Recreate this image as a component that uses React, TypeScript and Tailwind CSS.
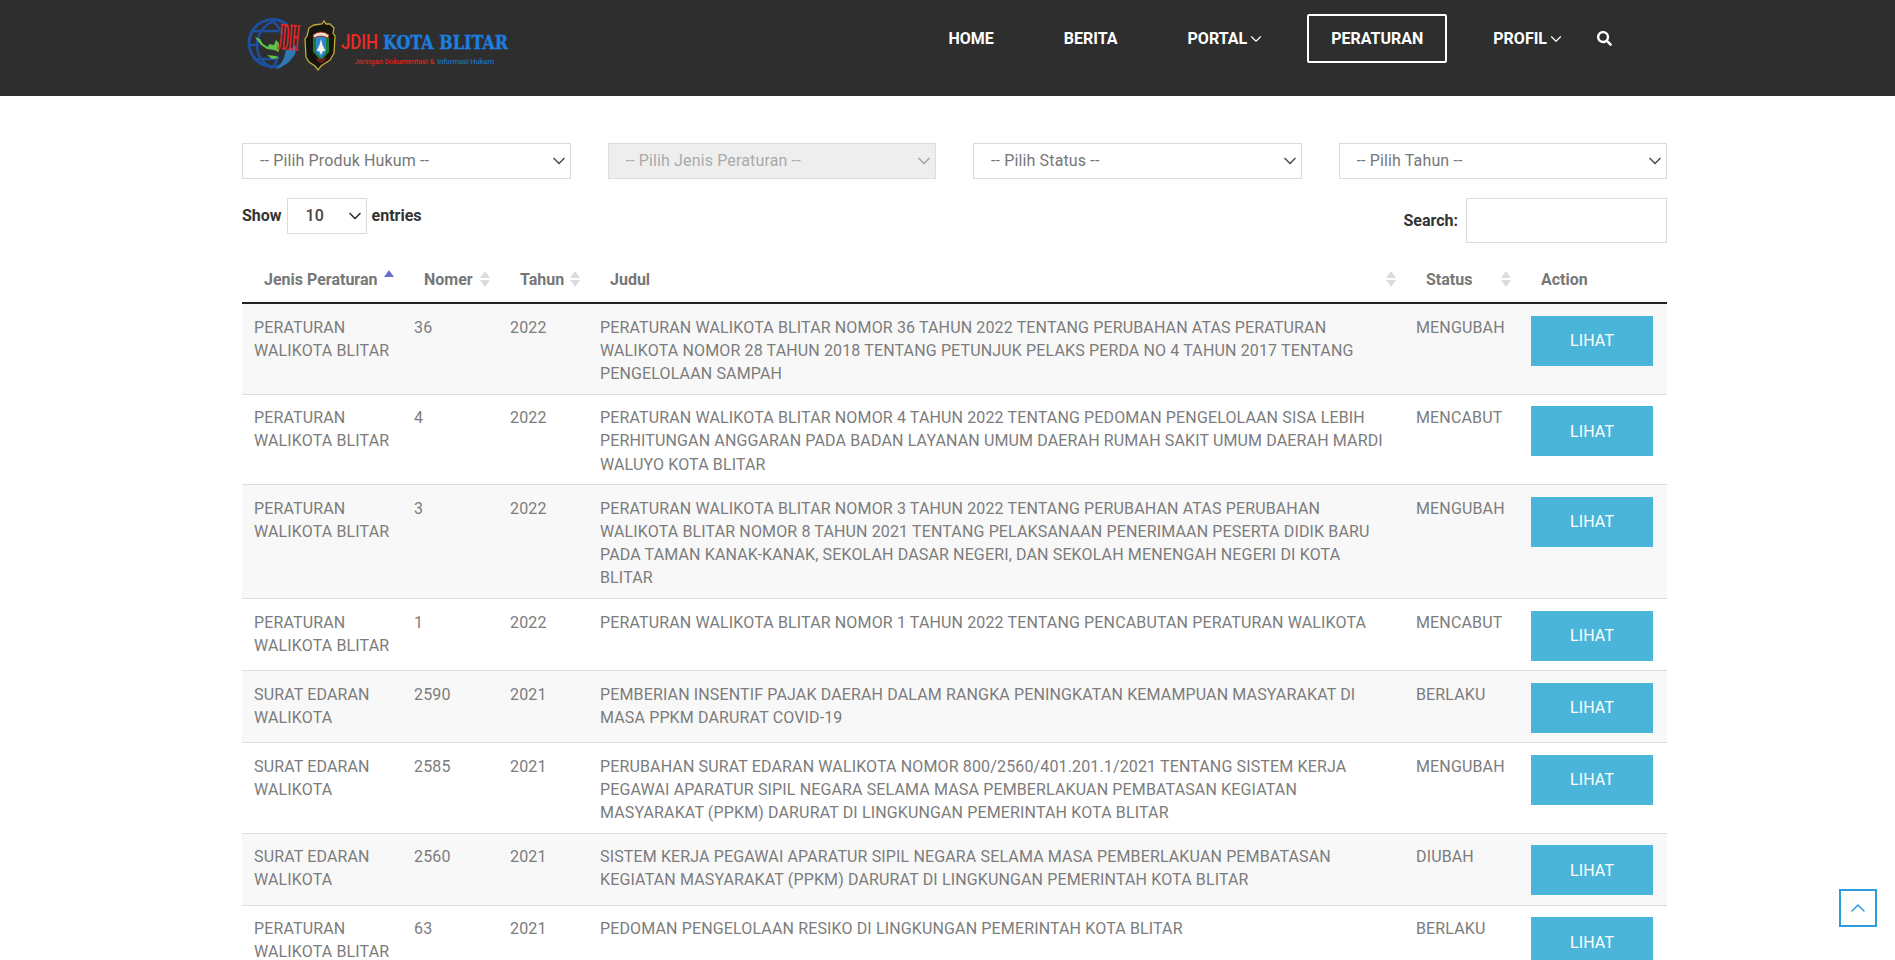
import { ChevronDown, ChevronUp } from "lucide-react";
import { FaSearch } from "react-icons/fa";

type Row = {
  jenis: string;
  nomer: string;
  tahun: string;
  judul: string;
  status: string;
};

const rows: Row[] = [
  {
    jenis: "PERATURAN WALIKOTA BLITAR",
    nomer: "36",
    tahun: "2022",
    judul:
      "PERATURAN WALIKOTA BLITAR NOMOR 36 TAHUN 2022 TENTANG PERUBAHAN ATAS PERATURAN WALIKOTA NOMOR 28 TAHUN 2018 TENTANG PETUNJUK PELAKS PERDA NO 4 TAHUN 2017 TENTANG PENGELOLAAN SAMPAH",
    status: "MENGUBAH",
  },
  {
    jenis: "PERATURAN WALIKOTA BLITAR",
    nomer: "4",
    tahun: "2022",
    judul:
      "PERATURAN WALIKOTA BLITAR NOMOR 4 TAHUN 2022 TENTANG PEDOMAN PENGELOLAAN SISA LEBIH PERHITUNGAN ANGGARAN PADA BADAN LAYANAN UMUM DAERAH RUMAH SAKIT UMUM DAERAH MARDI WALUYO KOTA BLITAR",
    status: "MENCABUT",
  },
  {
    jenis: "PERATURAN WALIKOTA BLITAR",
    nomer: "3",
    tahun: "2022",
    judul:
      "PERATURAN WALIKOTA BLITAR NOMOR 3 TAHUN 2022 TENTANG PERUBAHAN ATAS PERUBAHAN WALIKOTA BLITAR NOMOR 8 TAHUN 2021 TENTANG PELAKSANAAN PENERIMAAN PESERTA DIDIK BARU PADA TAMAN KANAK-KANAK, SEKOLAH DASAR NEGERI, DAN SEKOLAH MENENGAH NEGERI DI KOTA BLITAR",
    status: "MENGUBAH",
  },
  {
    jenis: "PERATURAN WALIKOTA BLITAR",
    nomer: "1",
    tahun: "2022",
    judul: "PERATURAN WALIKOTA BLITAR NOMOR 1 TAHUN 2022 TENTANG PENCABUTAN PERATURAN WALIKOTA",
    status: "MENCABUT",
  },
  {
    jenis: "SURAT EDARAN WALIKOTA",
    nomer: "2590",
    tahun: "2021",
    judul:
      "PEMBERIAN INSENTIF PAJAK DAERAH DALAM RANGKA PENINGKATAN KEMAMPUAN MASYARAKAT DI MASA PPKM DARURAT COVID-19",
    status: "BERLAKU",
  },
  {
    jenis: "SURAT EDARAN WALIKOTA",
    nomer: "2585",
    tahun: "2021",
    judul:
      "PERUBAHAN SURAT EDARAN WALIKOTA NOMOR 800/2560/401.201.1/2021 TENTANG SISTEM KERJA PEGAWAI APARATUR SIPIL NEGARA SELAMA MASA PEMBERLAKUAN PEMBATASAN KEGIATAN MASYARAKAT (PPKM) DARURAT DI LINGKUNGAN PEMERINTAH KOTA BLITAR",
    status: "MENGUBAH",
  },
  {
    jenis: "SURAT EDARAN WALIKOTA",
    nomer: "2560",
    tahun: "2021",
    judul:
      "SISTEM KERJA PEGAWAI APARATUR SIPIL NEGARA SELAMA MASA PEMBERLAKUAN PEMBATASAN KEGIATAN MASYARAKAT (PPKM) DARURAT DI LINGKUNGAN PEMERINTAH KOTA BLITAR",
    status: "DIUBAH",
  },
  {
    jenis: "PERATURAN WALIKOTA BLITAR",
    nomer: "63",
    tahun: "2021",
    judul: "PEDOMAN PENGELOLAAN RESIKO DI LINGKUNGAN PEMERINTAH KOTA BLITAR",
    status: "BERLAKU",
  },
];

function Logo() {
  return (
    <div className="flex items-start">
      <svg width="92" height="52" viewBox="0 0 92 52" className="block shrink-0 overflow-visible">
        {/* globe */}
        <path d="M40 4.500A23.500 23.500 0 1 0 49 25" fill="none" stroke="#1f4f9c" strokeWidth="3" />
        <path d="M25.500 1.500C13 8 10 18 10 25s3 17 15.500 23" fill="none" stroke="#1f4f9c" strokeWidth="2.500" />
        <path d="M25.500 1.500C32 6 34 10 35 14M31 36c-1 5-3 9-5.500 12" fill="none" stroke="#1f4f9c" strokeWidth="2.500" />
        <path d="M6 11h26M2 25h10M6 39h24" stroke="#1f4f9c" strokeWidth="2.500" />
        <path d="M8 17l5 2 3 5 5 3 1-3 5 1 2-5 3 3v9l-5-2-7-1-6-4-4-5zM20 35l9 1 3 2-7 1z" fill="#5fc24a" />
        <path d="M49 26l-1 8-6 8-9 6-5 1 5-4 4-7 2-8z" fill="#2e78b8" />
        <text
          x="0"
          y="0"
          fill="#e8262a"
          fontFamily="Liberation Serif"
          fontWeight="700"
          fontSize="13"
          transform="translate(30 29) rotate(5) scale(0.68 3)"
        >
          JDIH
        </text>
        {/* shield */}
        <path
          d="M62 8l5-3 8-1 2-3 2 3 4 0 4 4-1 5 2 3-1 17-4 7-9 6-3 4-3-4-6-4-3-5-1-18 2-3z"
          fill="#15140d"
          stroke="#c0ab3c"
          strokeWidth="1.300"
        />
        <path d="M66 15q8-6 16 0v17l-8 9-8-9z" fill="#1c7a3f" />
        <path d="M69 18q5-2.500 10 0v14l-5 6-5-6z" fill="#2f86cc" />
        <path d="M66 15q8-6 16 0l-1 3q-7-4-14 0z" fill="#e7e0cf" stroke="#b3261e" strokeWidth="0.900" />
        <path d="M74 19l1.500 6 3 6h-2.500l-2 4-2-4h-2.500l3-6z" fill="#f4f1e8" />
        <path d="M68 37q6 4 12 0l-3 5q-3 2-6 0z" fill="#6b1a15" />
      </svg>
      <div className="ml-[2px] flex flex-col items-center pt-[11px]">
        <div className="flex h-[24px] w-[166px] items-center whitespace-nowrap">
          <span className="inline-block w-[37px] shrink-0 origin-left scale-x-[0.8] text-[21px] font-medium text-[#ee2b24]">
            JDIH
          </span>
          <span className="ml-[5px] inline-block w-[124px] shrink-0 origin-left scale-x-[0.84] font-['DejaVu_Serif',serif] text-[19px] font-bold text-[#1c7fe0] [-webkit-text-stroke:0.4px_#1c7fe0]">
            KOTA BLITAR
          </span>
        </div>
        <div className="mt-[1px] text-[7.500px] leading-[11px] font-medium tracking-[-0.1px] whitespace-nowrap">
          <span className="text-[#d8261f]">Jaringan Dokumentasi &amp;</span>
          <span className="ml-[3px] text-[#1c6fc0]">Informasi Hukum</span>
        </div>
      </div>
    </div>
  );
}

function Header() {
  return (
    <header className="h-[96px] bg-[#2e2e2e]">
      <div className="ml-[242px] flex w-[1425px] items-start justify-between pr-[55px] pl-[5px]">
        <div className="mt-[20px]">
          <Logo />
        </div>
        <nav className="mt-[14px] flex items-center gap-[22px] text-base font-bold text-white">
          <a className="flex h-[49px] items-center border-2 border-transparent px-[22px]">HOME</a>
          <a className="flex h-[49px] items-center border-2 border-transparent px-[22px]">BERITA</a>
          <a className="flex h-[49px] items-center border-2 border-transparent px-[22px]">
            PORTAL
            <ChevronDown size={18} strokeWidth={1.500} className="-mr-[4px]" />
          </a>
          <a className="flex h-[49px] items-center rounded-[2px] border-2 border-white px-[22px]">PERATURAN</a>
          <a className="flex h-[49px] items-center border-2 border-transparent px-[22px]">
            PROFIL
            <ChevronDown size={18} strokeWidth={1.500} className="-mr-[4px]" />
          </a>
          <FaSearch size={15} className="ml-[-10px]" />
        </nav>
      </div>
    </header>
  );
}

function FilterSelect({ label, disabled }: { label: string; disabled?: boolean }) {
  return (
    <div className="relative">
      <select
        disabled={disabled}
        className={
          disabled
            ? "h-[36px] w-full appearance-none border border-[#dcdcdc] bg-[#eeeeee] pl-[17px] text-base tracking-[0.14px] text-[#aaaaaa] opacity-100"
            : "h-[36px] w-full appearance-none border border-[#dcdcdc] bg-white pl-[17px] text-base tracking-[0.14px] text-[#777777]"
        }
      >
        <option>{label}</option>
      </select>
      <ChevronDown
        size={20}
        strokeWidth={2}
        className={
          disabled
            ? "pointer-events-none absolute top-[8px] right-[2px] text-[#a5a5a5]"
            : "pointer-events-none absolute top-[8px] right-[2px] text-[#555555]"
        }
      />
    </div>
  );
}

function SortIcon({ active }: { active?: boolean }) {
  if (active) {
    return (
      <svg width="12" height="20" viewBox="0 0 12 20" className="shrink-0">
        <path d="M1 8l5-7 5 7z" fill="#6a6fd0" />
      </svg>
    );
  }
  return (
    <svg width="12" height="20" viewBox="0 0 12 20" className="shrink-0">
      <path d="M1 9l5-7 5 7z" fill="#dcdcdc" />
      <path d="M1 11l5 7 5-7z" fill="#dcdcdc" />
    </svg>
  );
}

function Th({ label, sort, active, width }: { label: string; sort?: boolean; active?: boolean; width: string }) {
  return (
    <th className={width + " h-[46px] p-0 text-left font-bold text-[#777777]"}>
      <div className="flex items-center justify-between pr-[7px] pl-[22px]">
        <span>{label}</span>
        {sort && <SortIcon active={active} />}
      </div>
    </th>
  );
}

export default function App() {
  return (
    <div className="h-screen overflow-hidden bg-white font-['Roboto',sans-serif] text-base leading-[23.2px] text-[#7c7c7c]">
      <Header />
      <main className="ml-[242px] w-[1425px] pt-[47px]">
        <div className="grid grid-cols-4 gap-[37px]">
          <FilterSelect label="-- Pilih Produk Hukum --" />
          <FilterSelect label="-- Pilih Jenis Peraturan --" disabled />
          <FilterSelect label="-- Pilih Status --" />
          <FilterSelect label="-- Pilih Tahun --" />
        </div>

        <div className="mt-[19px] flex items-start justify-between">
          <div className="flex h-[36px] items-center font-bold text-[#333333]">
            <span>Show</span>
            <div className="relative mx-[5px]">
              <select className="h-[36px] w-[80px] appearance-none border border-[#dcdcdc] bg-white pl-[18px] font-medium text-[#444444]">
                <option>10</option>
              </select>
              <ChevronDown size={20} strokeWidth={2} className="pointer-events-none absolute top-[8px] right-[2px] text-[#333333]" />
            </div>
            <span>entries</span>
          </div>
          <div className="flex items-center font-bold text-[#333333]">
            <span className="mr-[8px]">Search:</span>
            <input className="h-[45px] w-[201px] border border-[#dcdcdc] bg-white" />
          </div>
        </div>

        <table className="mt-[14px] w-full table-fixed border-collapse">
          <thead>
            <tr className="border-b-2 border-[#222222]">
              <Th label="Jenis Peraturan" sort active width="w-[160px]" />
              <Th label="Nomer" sort width="w-[96px]" />
              <Th label="Tahun" sort width="w-[90px]" />
              <Th label="Judul" sort width="w-[816px]" />
              <Th label="Status" sort width="w-[115px]" />
              <Th label="Action" width="w-[148px]" />
            </tr>
          </thead>
          <tbody className="tracking-[0.14px]">
            {rows.map((row, i) => (
              <tr key={row.nomer + row.tahun} className={i % 2 === 0 ? "border-b border-[#dddddd] bg-[#f8f8f8]" : "border-b border-[#dddddd] bg-white"}>
                <td className="pt-[11.500px] pr-[12px] pb-[8.500px] pl-[12px] align-top">{row.jenis}</td>
                <td className="pt-[11.500px] pb-[8.500px] pl-[12px] align-top">{row.nomer}</td>
                <td className="pt-[11.500px] pb-[8.500px] pl-[12px] align-top">{row.tahun}</td>
                <td className="pt-[11.500px] pr-[20px] pb-[8.500px] pl-[12px] align-top">{row.judul}</td>
                <td className="pt-[11.500px] pb-[8.500px] pl-[12px] align-top">{row.status}</td>
                <td className="pt-[11.500px] pb-[8.500px] pl-[12px] align-top">
                  <button className="mb-[1px] block h-[50px] w-[122px] border border-[#46b8da] bg-[#4ab5d9] text-white">
                    LIHAT
                  </button>
                </td>
              </tr>
            ))}
          </tbody>
        </table>
      </main>

      <button className="fixed right-[18px] bottom-[33px] flex h-[38px] w-[38px] items-center justify-center border-2 border-[#2a9fdc] bg-white text-[#2a9fdc]">
        <ChevronUp size={24} strokeWidth={1.500} />
      </button>
    </div>
  );
}
